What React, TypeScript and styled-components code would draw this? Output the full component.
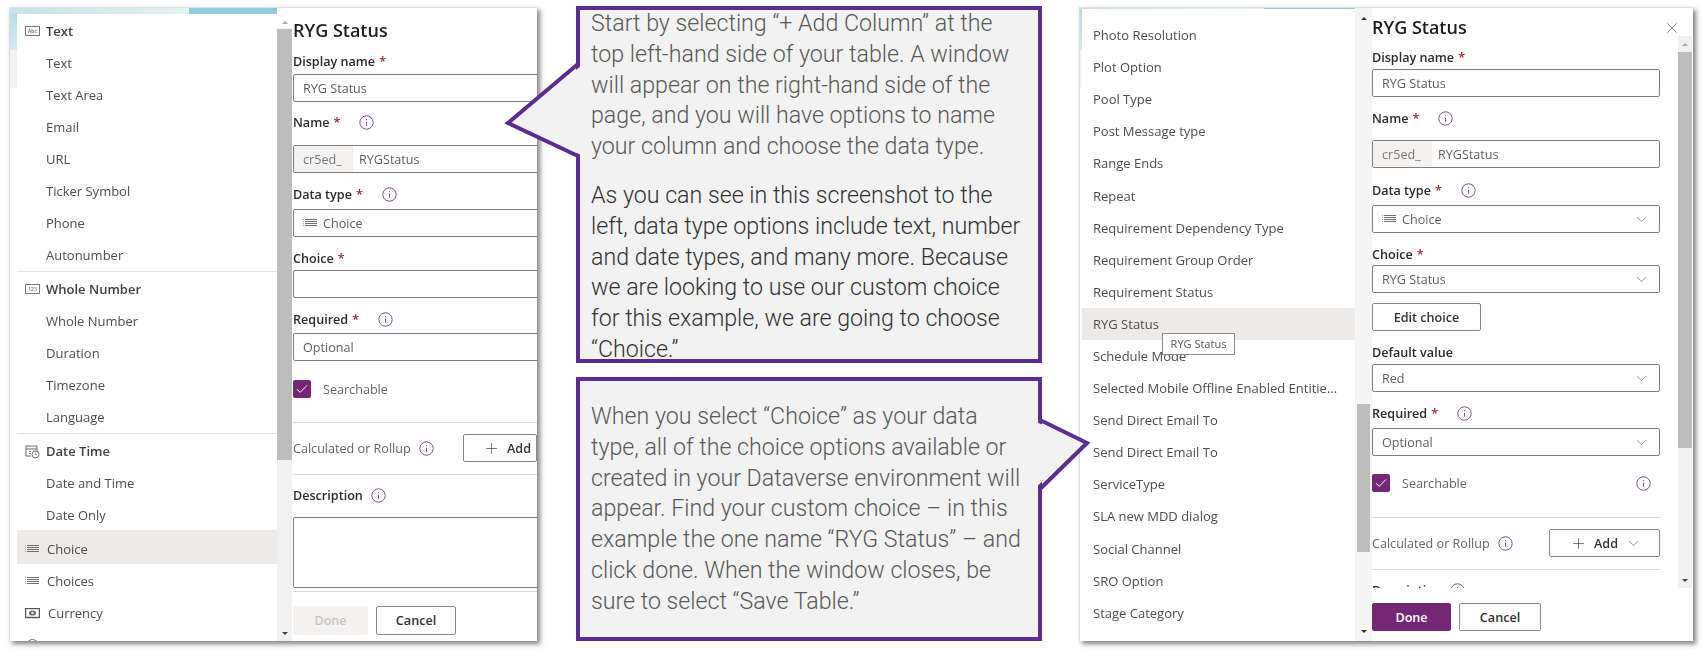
import React from 'react'
import styled, { createGlobalStyle } from 'styled-components'
import { ChevronDown, Plus, X } from 'lucide-react'

const GlobalStyle = createGlobalStyle`
    html, body {
        margin: 0;
        background: #fff;
    }
    * {
        box-sizing: border-box;
    }
`

const Page = styled.main`
    display: flex;
    align-items: flex-start;
    width: 1707px;
    height: 649px;
    padding: 7px 0 0 9px;
    overflow: hidden;
    font-family: 'Open Sans', 'Noto Sans', sans-serif;
    font-size: 13px;
`

const Shot = styled.section<{ $width: number }>`
    display: flex;
    flex: none;
    width: ${(p) => p.$width}px;
    height: 634px;
    background: #fff;
    border-top: 1px solid #e2e2e2;
    border-left: 1px solid #dcdcdc;
    box-shadow: 3px 3px 5px rgba(0, 0, 0, 0.5);
    overflow: hidden;

    & > * {
        filter: blur(0.35px);
    }
`

const MenuBackdrop = styled.div<{ $width: number; $inset: number; $top: number }>`
    flex: none;
    width: ${(p) => p.$width}px;
    padding: ${(p) => p.$top}px 0 0 ${(p) => p.$inset}px;
    background:
        linear-gradient(90deg, #c4e2e8, #e6f2f4 67%, #93ccd9 67%) 0 0 / 100% ${(p) => p.$top}px no-repeat,
        linear-gradient(#b5dbe3 0, #d5eaee 42px, #f3f3f3 42px, #f3f3f3 80px, #fff 80px) 0 0 / ${(p) => p.$inset}px 100% no-repeat,
        #fff;
`

const Menu = styled.div<{ $pad: number }>`
    position: relative;
    height: 100%;
    padding-top: ${(p) => p.$pad}px;
    background: #fff;
    overflow: hidden;
`

const MenuRow = styled.div<{ $pitch: number; $inset: number; $head?: boolean; $active?: boolean }>`
    display: flex;
    align-items: center;
    gap: ${(p) => (p.$head ? 6 : 8)}px;
    height: ${(p) => p.$pitch}px;
    padding-left: ${(p) => p.$inset}px;
    color: ${(p) => (p.$head ? '#3f3f3f' : '#4d4d4d')};
    font-weight: ${(p) => (p.$head ? 600 : 400)};
    white-space: nowrap;
    background: ${(p) => (p.$active ? '#edebe9' : 'transparent')};
`

const ChoiceRow = styled(MenuRow)`
    height: 34px;
    margin: -1px 0 1px;
    padding-top: 4px;
`

const MenuDivider = styled.div<{ $gap: number }>`
    height: 1px;
    margin-bottom: ${(p) => p.$gap}px;
    background: #e4e4e4;
`

const Tooltip = styled.div`
    position: absolute;
    top: 324px;
    left: 80px;
    width: 73px;
    height: 22px;
    font-size: 11px;
    line-height: 20px;
    text-align: center;
    color: #555;
    background: #fff;
    border: 1px solid #8c8c8c;
`

const Scrollbar = styled.div<{ $width: number; $top?: number; $left?: number; $height?: string; $bg: string }>`
    position: relative;
    flex: none;
    width: ${(p) => p.$width}px;
    height: ${(p) => p.$height ?? '100%'};
    margin-top: ${(p) => p.$top ?? 0}px;
    margin-left: ${(p) => p.$left ?? 0}px;
    padding-top: 1px;
    background: ${(p) => p.$bg};
`

const ScrollThumb = styled.div<{ $top: number; $height: number; $side: number }>`
    position: absolute;
    top: ${(p) => p.$top}px;
    left: ${(p) => p.$side}px;
    right: ${(p) => p.$side}px;
    height: ${(p) => p.$height}px;
    background: #bdbdbd;
`

const ScrollArrow = styled.div<{ $dir: 'up' | 'down'; $offset: number; $color: string }>`
    position: absolute;
    ${(p) => (p.$dir === 'up' ? 'top' : 'bottom')}: ${(p) => p.$offset}px;
    left: 50%;
    margin-left: -3px;
    border-left: 3px solid transparent;
    border-right: 3px solid transparent;
    ${(p) => (p.$dir === 'up' ? 'border-bottom' : 'border-top')}: 3px solid ${(p) => p.$color};
`

const FormColumn = styled.div<{ $width: number; $inset: number }>`
    position: relative;
    flex: none;
    width: ${(p) => p.$width}px;
    height: 100%;
    padding-left: ${(p) => p.$inset}px;
    font-size: 12.6px;
    overflow: hidden;
`

const FormBody = styled.div`
    flex: none;
    width: 288px;
    height: 580px;
    overflow: hidden;
`

const FormScrollRow = styled.div`
    display: flex;
    height: 580px;
`

const Heading = styled.h2<{ $gap: number }>`
    margin: ${(p) => p.$gap}px 0 0;
    font-size: 18px;
    line-height: 20px;
    font-weight: 600;
    color: #1f1f1f;
`

const FieldLabel = styled.div<{ $gap: number }>`
    display: flex;
    align-items: center;
    height: 18px;
    margin-top: ${(p) => p.$gap}px;
    font-weight: 600;
    color: #2b2b2b;
`

const Star = styled.span`
    margin-left: 4px;
    color: #a4262c;
`

const InfoMark = styled.svg<{ $gap: number }>`
    flex: none;
    width: 15px;
    height: 15px;
    margin-left: ${(p) => p.$gap}px;
`

const InputBox = styled.div<{ $gap: number; $height?: number; $clip?: boolean }>`
    display: flex;
    align-items: center;
    gap: 6px;
    width: ${(p) => (p.$clip ? '262px' : '288px')};
    height: ${(p) => p.$height ?? 28}px;
    margin-top: ${(p) => p.$gap}px;
    padding: 0 9px;
    color: #5f5f5f;
    border: 1px solid #808080;
    border-radius: 2px;
    white-space: nowrap;
`

const Prefix = styled.span`
    display: flex;
    align-items: center;
    align-self: stretch;
    width: 59px;
    margin-left: -9px;
    padding-left: 9px;
    color: #777;
    background: #f3f2f1;
`

const SelectValue = styled.span`
    flex: 1;
`

const CheckRow = styled.div<{ $gap: number; $pad?: number }>`
    display: flex;
    align-items: center;
    height: 18px;
    margin-top: ${(p) => p.$gap}px;
    padding-right: ${(p) => p.$pad ?? 0}px;
    color: #666;
`

const CheckBox = styled.span`
    display: flex;
    align-items: center;
    justify-content: center;
    flex: none;
    width: 18px;
    height: 18px;
    margin-right: 12px;
    background: #742774;
    border-radius: 2px;
`

const Divider = styled.div<{ $gap: number }>`
    height: 1px;
    margin-top: ${(p) => p.$gap}px;
    background: #d9d9d9;
`

const CalcRow = styled.div<{ $gap: number }>`
    display: flex;
    align-items: center;
    height: 28px;
    margin-top: ${(p) => p.$gap}px;
    color: #666;
    white-space: nowrap;
`

const AddButton = styled.div<{ $width: number; $left: number }>`
    display: flex;
    align-items: center;
    flex: none;
    gap: 7px;
    width: ${(p) => p.$width}px;
    height: 28px;
    margin-left: auto;
    padding-left: ${(p) => p.$left}px;
    font-weight: 600;
    color: #333;
    border: 1px solid #8a8a8a;
    border-radius: 2px;
`

const ButtonRow = styled.div<{ $gap: number }>`
    display: flex;
    gap: 8px;
    margin-top: ${(p) => p.$gap}px;
`

const FootButton = styled.div<{ $width: number; $height?: number; $tone?: 'primary' | 'disabled' }>`
    display: flex;
    align-items: center;
    justify-content: center;
    width: ${(p) => p.$width}px;
    height: ${(p) => p.$height ?? 28}px;
    font-weight: 600;
    border-radius: 2px;
    color: ${(p) => (p.$tone === 'primary' ? '#fff' : p.$tone === 'disabled' ? '#c8c6c4' : '#333')};
    background: ${(p) => (p.$tone === 'primary' ? '#742774' : p.$tone === 'disabled' ? '#f3f2f1' : '#fff')};
    border: 1px solid ${(p) => (p.$tone === 'primary' ? '#742774' : p.$tone === 'disabled' ? '#f3f2f1' : '#8a8a8a')};
`

const EditButton = styled(FootButton)`
    margin-top: 10px;
`

const CloseButton = styled.div`
    position: absolute;
    top: 11px;
    right: 12px;
    display: flex;
    color: #666;
`

const CalloutColumn = styled.div`
    position: relative;
    z-index: 2;
    display: flex;
    flex: none;
    flex-direction: column;
    gap: 14px;
    width: 466px;
    margin: -1px 0 0 39px;
`

const Callout = styled.div<{ $height: number; $top: number }>`
    position: relative;
    height: ${(p) => p.$height}px;
    padding: ${(p) => p.$top}px 0 0 11px;
    font-family: Roboto, 'Open Sans', sans-serif;
    font-size: 23.2px;
    font-weight: 300;
    line-height: 30.8px;
    background: #f2f2f2;
    border: 4px solid #5c2d91;
    white-space: nowrap;
`

const CalloutText = styled.p<{ $dark?: boolean; $lift?: number }>`
    margin: ${(p) => -(p.$lift ?? 0)}px 0 18px;
    color: ${(p) => (p.$dark ? '#333' : '#595959')};
`

const Pointer = styled.svg<{ $side: 'left' | 'right'; $offset: number; $top: number }>`
    position: absolute;
    ${(p) => p.$side}: ${(p) => p.$offset}px;
    top: ${(p) => p.$top}px;
    overflow: visible;
`

const ShotGap = styled.div`
    flex: none;
    width: 37px;
`

const ListIcon = () => (
    <svg width="14" height="10" viewBox="0 0 14 10">
        <path d="M0 1.5h1M0 3.5h1M0 5.5h1M0 7.5h1" stroke="#aaa" />
        <path d="M2 1.5h12M2 3.5h12M2 5.5h12M2 7.5h12" stroke="#6f6f6f" />
    </svg>
)

const BoxIcon = ({ label }: { label: string }) => (
    <svg width="15" height="12" viewBox="0 0 15 12">
        <rect x="0.5" y="1.5" width="14" height="9" fill="#fff" stroke="#777" />
        <text x="7.5" y="8" fontSize="5" textAnchor="middle" fill="#666" fontFamily="Open Sans">
            {label}
        </text>
    </svg>
)

const DateIcon = () => (
    <svg width="15" height="15" viewBox="0 0 15 15" fill="none">
        <path d="M1 2h11v6M1 2v10h5M1 5h11M4 7.5h2M4 9.5h2M8 7h1" stroke="#6b6b6b" />
        <circle cx="10.5" cy="10.5" r="3.5" fill="#fff" stroke="#6b6b6b" />
        <path d="M10.5 8.7v2h1.5" stroke="#6b6b6b" strokeWidth="0.8" />
    </svg>
)

const MoneyIcon = () => (
    <svg width="15" height="11" viewBox="0 0 15 11">
        <rect x="0.5" y="0.5" width="14" height="9" fill="#fff" stroke="#555" strokeWidth="1.4" />
        <ellipse cx="7.5" cy="5" rx="3.5" ry="2.6" fill="#666" />
        <circle cx="7.5" cy="5" r="1.3" fill="#ddd" />
    </svg>
)

const GlobeIcon = () => (
    <svg width="15" height="15" viewBox="0 0 15 15" fill="none">
        <circle cx="7.5" cy="7.5" r="6" stroke="#777" />
    </svg>
)

const Info = ({ gap }: { gap: number }) => (
    <InfoMark $gap={gap} viewBox="0 0 15 15" fill="none">
        <circle cx="7.5" cy="7.5" r="6.7" stroke="#7f4f93" />
        <path d="M7.5 6.8v4" stroke="#7f4f93" />
        <circle cx="7.5" cy="4.6" r="0.7" fill="#7f4f93" />
    </InfoMark>
)

const Check = () => (
    <svg width="12" height="10" viewBox="0 0 12 10" fill="none">
        <path d="M1 5.2 4.2 8.4 11 1.4" stroke="#fff" />
    </svg>
)

const Chevron = () => <ChevronDown size={17} strokeWidth={0.9} color="#666" />

const leftMenu = [
    { label: 'Text', head: true, icon: <BoxIcon label="Abc" /> },
    { label: 'Text' },
    { label: 'Text Area' },
    { label: 'Email' },
    { label: 'URL' },
    { label: 'Ticker Symbol' },
    { label: 'Phone' },
    { label: 'Autonumber', divider: 1 },
    { label: 'Whole Number', head: true, icon: <BoxIcon label="123" /> },
    { label: 'Whole Number' },
    { label: 'Duration' },
    { label: 'Timezone' },
    { label: 'Language', divider: 1 },
    { label: 'Date Time', head: true, icon: <DateIcon /> },
    { label: 'Date and Time' },
    { label: 'Date Only' },
    { label: 'Choice', icon: <ListIcon />, active: true },
    { label: 'Choices', icon: <ListIcon /> },
    { label: 'Currency', icon: <MoneyIcon /> },
    { label: '', icon: <GlobeIcon /> },
]

const rightMenu = [
    'Photo Resolution',
    'Plot Option',
    'Pool Type',
    'Post Message type',
    'Range Ends',
    'Repeat',
    'Requirement Dependency Type',
    'Requirement Group Order',
    'Requirement Status',
    'RYG Status',
    'Schedule Mode',
    'Selected Mobile Offline Enabled Entitie...',
    'Send Direct Email To',
    'Send Direct Email To',
    'ServiceType',
    'SLA new MDD dialog',
    'Social Channel',
    'SRO Option',
    'Stage Category',
]

function LeftForm() {
    return (
        <FormColumn $width={245} $inset={1}>
            <Heading $gap={12}>RYG Status</Heading>
            <FieldLabel $gap={12}>
                Display name<Star>*</Star>
            </FieldLabel>
            <InputBox $gap={4} $clip>RYG Status</InputBox>
            <FieldLabel $gap={11}>
                Name<Star>*</Star>
                <Info gap={19} />
            </FieldLabel>
            <InputBox $gap={14} $clip>
                <Prefix>cr5ed_</Prefix>RYGStatus
            </InputBox>
            <FieldLabel $gap={12}>
                Data type<Star>*</Star>
                <Info gap={19} />
            </FieldLabel>
            <InputBox $gap={6} $clip>
                <ListIcon />
                Choice
            </InputBox>
            <FieldLabel $gap={12}>
                Choice<Star>*</Star>
            </FieldLabel>
            <InputBox $gap={3} $clip />
            <FieldLabel $gap={12}>
                Required<Star>*</Star>
                <Info gap={19} />
            </FieldLabel>
            <InputBox $gap={5} $clip>Optional</InputBox>
            <CheckRow $gap={19}>
                <CheckBox>
                    <Check />
                </CheckBox>
                Searchable
            </CheckRow>
            <Divider $gap={24} />
            <CalcRow $gap={11}>
                Calculated or Rollup
                <Info gap={8} />
                <AddButton $width={74} $left={19}>
                    <Plus size={17} strokeWidth={1} color="#444" />
                    Add
                </AddButton>
            </CalcRow>
            <Divider $gap={12} />
            <FieldLabel $gap={11}>
                Description
                <Info gap={8} />
            </FieldLabel>
            <InputBox $gap={13} $height={71} $clip />
            <Divider $gap={3} />
            <ButtonRow $gap={14}>
                <FootButton $width={75} $height={29} $tone="disabled">Done</FootButton>
                <FootButton $width={80} $height={29}>Cancel</FootButton>
            </ButtonRow>
        </FormColumn>
    )
}

function RightForm() {
    return (
        <FormColumn $width={321} $inset={0}>
            <FormScrollRow>
                <FormBody>
                    <Heading $gap={9}>RYG Status</Heading>
                    <FieldLabel $gap={11}>
                        Display name<Star>*</Star>
                    </FieldLabel>
                    <InputBox $gap={3}>RYG Status</InputBox>
                    <FieldLabel $gap={12}>
                        Name<Star>*</Star>
                        <Info gap={19} />
                    </FieldLabel>
                    <InputBox $gap={13}>
                        <Prefix>cr5ed_</Prefix>RYGStatus
                    </InputBox>
                    <FieldLabel $gap={13}>
                        Data type<Star>*</Star>
                        <Info gap={19} />
                    </FieldLabel>
                    <InputBox $gap={6}>
                        <ListIcon />
                        <SelectValue>Choice</SelectValue>
                        <Chevron />
                    </InputBox>
                    <FieldLabel $gap={12}>
                        Choice<Star>*</Star>
                    </FieldLabel>
                    <InputBox $gap={2}>
                        <SelectValue>RYG Status</SelectValue>
                        <Chevron />
                    </InputBox>
                    <EditButton $width={109}>Edit choice</EditButton>
                    <FieldLabel $gap={12}>Default value</FieldLabel>
                    <InputBox $gap={3}>
                        <SelectValue>Red</SelectValue>
                        <Chevron />
                    </InputBox>
                    <FieldLabel $gap={12}>
                        Required<Star>*</Star>
                        <Info gap={19} />
                    </FieldLabel>
                    <InputBox $gap={6}>
                        <SelectValue>Optional</SelectValue>
                        <Chevron />
                    </InputBox>
                    <CheckRow $gap={18} $pad={9}>
                        <CheckBox>
                            <Check />
                        </CheckBox>
                        <SelectValue>Searchable</SelectValue>
                        <Info gap={0} />
                    </CheckRow>
                    <Divider $gap={25} />
                    <CalcRow $gap={11}>
                        Calculated or Rollup
                        <Info gap={8} />
                        <AddButton $width={111} $left={20}>
                            <Plus size={17} strokeWidth={1} color="#444" />
                            Add
                            <Chevron />
                        </AddButton>
                    </CalcRow>
                    <Divider $gap={12} />
                    <FieldLabel $gap={11}>
                        Description
                        <Info gap={8} />
                    </FieldLabel>
                </FormBody>
                <Scrollbar $width={14} $left={18} $top={28} $height="552px" $bg="#f1f1f1">
                    <ScrollArrow $dir="up" $offset={7} $color="#aaa" />
                    <ScrollThumb $top={16} $height={396} $side={0} />
                    <ScrollArrow $dir="down" $offset={6} $color="#444" />
                </Scrollbar>
            </FormScrollRow>
            <ButtonRow $gap={15}>
                <FootButton $width={79} $tone="primary">Done</FootButton>
                <FootButton $width={82}>Cancel</FootButton>
            </ButtonRow>
            <CloseButton>
                <X size={18} strokeWidth={1} />
            </CloseButton>
        </FormColumn>
    )
}

export default function App() {
    return (
        <Page>
            <GlobalStyle />
            <Shot $width={528}>
                <MenuBackdrop $width={267} $inset={7} $top={6}>
                    <Menu $pad={1}>
                        {leftMenu.map((item, i) => {
                            const Row = item.active ? ChoiceRow : MenuRow
                            return (
                                <React.Fragment key={i}>
                                    <Row
                                        $pitch={32}
                                        $inset={item.icon ? 8 : 29}
                                        $head={item.head}
                                        $active={item.active}
                                    >
                                        {item.icon}
                                        {item.label}
                                    </Row>
                                    {item.divider !== undefined && <MenuDivider $gap={item.divider} />}
                                </React.Fragment>
                            )
                        })}
                    </Menu>
                </MenuBackdrop>
                <Scrollbar $width={15} $bg="linear-gradient(#fff 0 20px, #f1f1f1 20px)">
                    <ScrollArrow $dir="up" $offset={13} $color="#aaa" />
                    <ScrollThumb $top={21} $height={431} $side={0} />
                    <ScrollArrow $dir="down" $offset={6} $color="#444" />
                </Scrollbar>
                <LeftForm />
            </Shot>
            <CalloutColumn>
                <Callout $height={357} $top={0}>
                    <CalloutText $lift={2}>
                        Start by selecting “+ Add Column” at the
                        <br />
                        top left-hand side of your table. A window
                        <br />
                        will appear on the right-hand side of the
                        <br />
                        page, and you will have options to name
                        <br />
                        your column and choose the data type.
                    </CalloutText>
                    <CalloutText $dark>
                        As you can see in this screenshot to the
                        <br />
                        left, data type options include text, number
                        <br />
                        and date types, and many more. Because
                        <br />
                        we are looking to use our custom choice
                        <br />
                        for this example, we are going to choose
                        <br />
                        “Choice.”
                    </CalloutText>
                    <Pointer $side="left" $offset={-78} $top={52} width="79" height="98">
                        <polygon points="79,4 6,61 79,93" fill="#f2f2f2" />
                        <polyline points="76,2 6,61 76,94" fill="none" stroke="#5c2d91" strokeWidth="4" />
                    </Pointer>
                </Callout>
                <Callout $height={264} $top={20}>
                    <CalloutText>
                        When you select “Choice” as your data
                        <br />
                        type, all of the choice options available or
                        <br />
                        created in your Dataverse environment will
                        <br />
                        appear. Find your custom choice – in this
                        <br />
                        example the one name “RYG Status” – and
                        <br />
                        click done. When the window closes, be
                        <br />
                        sure to select “Save Table.”
                    </CalloutText>
                    <Pointer $side="right" $offset={-56} $top={34} width="58" height="80">
                        <polygon points="0,7 51,28 0,72" fill="#f2f2f2" />
                        <polyline points="4,5 51,28 4,74" fill="none" stroke="#5c2d91" strokeWidth="4" />
                    </Pointer>
                </Callout>
            </CalloutColumn>
            <ShotGap />
            <Shot $width={614}>
                <MenuBackdrop $width={275} $inset={2} $top={1}>
                    <Menu $pad={10}>
                        {rightMenu.map((label, i) => (
                            <MenuRow key={i} $pitch={32.1} $inset={11} $active={label === 'RYG Status'}>
                                {label}
                            </MenuRow>
                        ))}
                        <Tooltip>RYG Status</Tooltip>
                    </Menu>
                </MenuBackdrop>
                <Scrollbar $width={17} $bg="#f5f5f5">
                    <ScrollArrow $dir="up" $offset={9} $color="#333" />
                    <ScrollThumb $top={396} $height={148} $side={2} />
                    <ScrollArrow $dir="down" $offset={8} $color="#333" />
                </Scrollbar>
                <RightForm />
            </Shot>
        </Page>
    )
}
